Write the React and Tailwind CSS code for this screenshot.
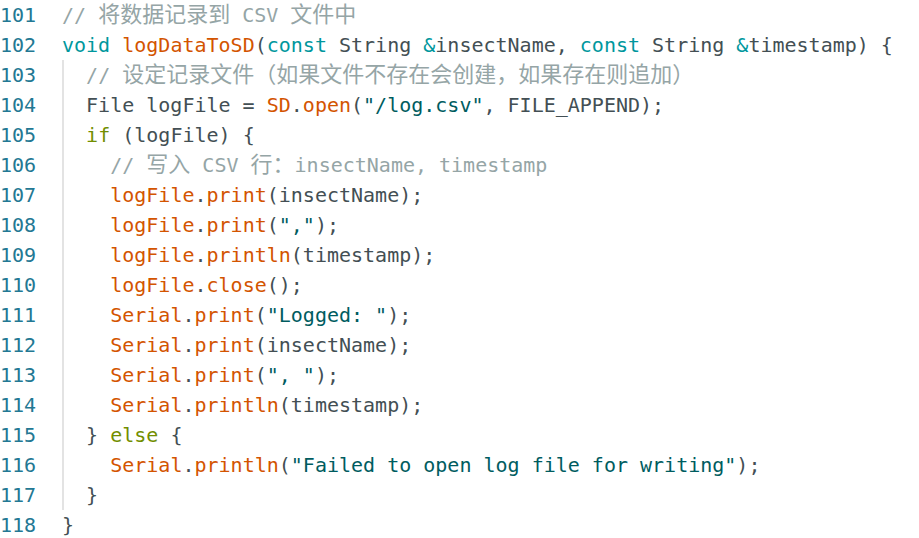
const C = {
  txt: 'text-[#434f54]',
  kw: 'text-[#00979d]',
  fn: 'text-[#d35400]',
  str: 'text-[#005c5f]',
  ctl: 'text-[#728e00]',
  cm: 'text-[#95a5a6]',
};

const lines = [
  { n: 101, t: [['// 将数据记录到 CSV 文件中', 'cm']] },
  {
    n: 102,
    t: [
      ['void', 'kw'], [' ', 'txt'], ['logDataToSD', 'fn'], ['(', 'txt'], ['const', 'kw'],
      [' String ', 'txt'], ['&', 'kw'], ['insectName, ', 'txt'], ['const', 'kw'],
      [' String ', 'txt'], ['&', 'kw'], ['timestamp) {', 'txt'],
    ],
  },
  { n: 103, t: [['  ', 'txt'], ['// 设定记录文件（如果文件不存在会创建，如果存在则追加）', 'cm']] },
  {
    n: 104,
    t: [
      ['  File logFile = ', 'txt'], ['SD', 'fn'], ['.', 'txt'], ['open', 'fn'], ['(', 'txt'],
      ['"/log.csv"', 'str'], [', FILE_APPEND);', 'txt'],
    ],
  },
  { n: 105, t: [['  ', 'txt'], ['if', 'ctl'], [' (logFile) {', 'txt']] },
  { n: 106, t: [['    ', 'txt'], ['// 写入 CSV 行：insectName, timestamp', 'cm']] },
  { n: 107, t: [['    ', 'txt'], ['logFile', 'fn'], ['.', 'txt'], ['print', 'fn'], ['(insectName);', 'txt']] },
  { n: 108, t: [['    ', 'txt'], ['logFile', 'fn'], ['.', 'txt'], ['print', 'fn'], ['(', 'txt'], ['","', 'str'], [');', 'txt']] },
  { n: 109, t: [['    ', 'txt'], ['logFile', 'fn'], ['.', 'txt'], ['println', 'fn'], ['(timestamp);', 'txt']] },
  { n: 110, t: [['    ', 'txt'], ['logFile', 'fn'], ['.', 'txt'], ['close', 'fn'], ['();', 'txt']] },
  { n: 111, t: [['    ', 'txt'], ['Serial', 'fn'], ['.', 'txt'], ['print', 'fn'], ['(', 'txt'], ['"Logged: "', 'str'], [');', 'txt']] },
  { n: 112, t: [['    ', 'txt'], ['Serial', 'fn'], ['.', 'txt'], ['print', 'fn'], ['(insectName);', 'txt']] },
  { n: 113, t: [['    ', 'txt'], ['Serial', 'fn'], ['.', 'txt'], ['print', 'fn'], ['(', 'txt'], ['", "', 'str'], [');', 'txt']] },
  { n: 114, t: [['    ', 'txt'], ['Serial', 'fn'], ['.', 'txt'], ['println', 'fn'], ['(timestamp);', 'txt']] },
  { n: 115, t: [['  } ', 'txt'], ['else', 'ctl'], [' {', 'txt']] },
  {
    n: 116,
    t: [
      ['    ', 'txt'], ['Serial', 'fn'], ['.', 'txt'], ['println', 'fn'], ['(', 'txt'],
      ['"Failed to open log file for writing"', 'str'], [');', 'txt'],
    ],
  },
  { n: 117, t: [['  }', 'txt']] },
  { n: 118, t: [['}', 'txt']] },
];

// CJK glyphs in the editor are a little wider than the mono cell
function Segment({ text }) {
  const parts = text.split(/([\u3000-\u303f\u4e00-\u9fff\uff00-\uffef]+)/);
  return parts.map((p, i) =>
    i % 2 === 1 ? (
      <span key={i} className="inline-block text-[22px] leading-[22px] font-['Noto_Sans_CJK_SC',sans-serif]">
        {p}
      </span>
    ) : (
      p
    )
  );
}

export default function App() {
  return (
    <div className="h-[538px] w-[919px] overflow-hidden bg-white font-['DejaVu_Sans_Mono','Noto_Sans_CJK_SC',monospace] text-[20px] leading-[30px]">
      {lines.map((line) => {
        const guided = line.n >= 103 && line.n <= 117;
        return (
          <div key={line.n} className="flex h-[30px] items-start">
            <div className="w-[36px] shrink-0 text-right text-[#237893]">{line.n}</div>
            <div className="relative ml-[26px] h-[30px] whitespace-pre">
              {guided && <span className="absolute left-0 top-0 h-[30px] w-[2px] bg-[#e3e3e3]" />}
              {line.t.map(([text, kind], i) => (
                <span key={i} className={C[kind]}>
                  <Segment text={text} />
                </span>
              ))}
            </div>
          </div>
        );
      })}
    </div>
  );
}
